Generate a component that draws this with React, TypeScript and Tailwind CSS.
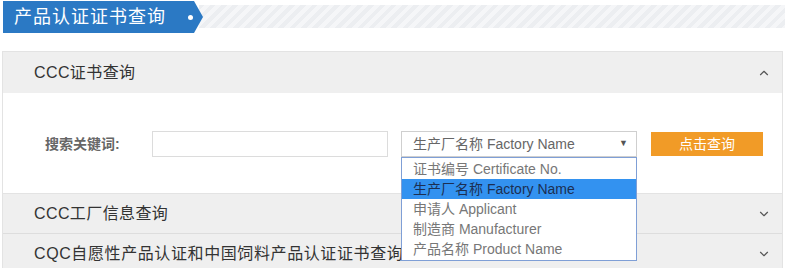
import { ChevronDown, ChevronUp } from "lucide-react";

const options = [
  "证书编号 Certificate No.",
  "生产厂名称 Factory Name",
  "申请人 Applicant",
  "制造商 Manufacturer",
  "产品名称 Product Name",
];

export default function App() {
  return (
    <div className="w-[785px] h-[268px] overflow-hidden bg-white font-['Liberation_Sans','Noto_Sans_CJK_SC',sans-serif]">
      {/* title bar */}
      <div className="flex items-start pt-[1px] pl-[3px]">
        <div className="relative z-10 flex items-center h-[32px] w-[200px] pl-[11px] bg-[#2b79c4] text-white text-[18px] tracking-[1px] [clip-path:polygon(0_0,191px_0,200px_50%,191px_100%,0_100%)]">
          产品认证证书查询
          <span className="ml-[22px] w-[5px] h-[5px] rounded-full bg-white" />
        </div>
        <div className="flex-1 -ml-[4px] mt-[4px] h-[23px] bg-[repeating-linear-gradient(135deg,#eceef1_0px,#eceef1_4px,#f5f6f8_4px,#f5f6f8_8px)]" />
      </div>

      {/* accordion */}
      <div className="mx-[2px] mt-[18px] border border-[#e3e3e3] text-[#333]">
        <div className="flex items-center justify-between h-[41px] pl-[31px] pr-[11px] bg-[#efefef] text-[16px] tracking-[0.4px]">
          <span>CCC证书查询</span>
          <ChevronUp size={14} strokeWidth={2} className="text-[#555]" />
        </div>

        <div className="flex items-center h-[100px] pt-[2px] pl-[42px] bg-white">
          <label className="w-[107px] text-[14px] font-bold text-[#666]">搜索关键词:</label>
          <input className="w-[236px] h-[26px] border border-[#dcdcdc] outline-none" />
          <div className="relative ml-[13px] w-[236px]">
            <div className="flex items-center justify-between h-[26px] pl-[11px] pr-[8px] border border-[#cfcfcf] text-[14px] text-[#666]">
              <span>生产厂名称 Factory Name</span>
              <span className="text-[9px] text-[#555]">▼</span>
            </div>
            <ul className="absolute z-20 top-full left-0 w-full pt-[1px] pb-[1px] bg-white border border-[#7f9fd6] text-[14px] text-[#777]">
              {options.map((o, i) => (
                <li
                  key={o}
                  className={
                    i === 1
                      ? "h-[20px] leading-[20px] pl-[11px] bg-[#3392f0] text-[#1c2f52]"
                      : "h-[20px] leading-[20px] pl-[11px]"
                  }
                >
                  {o}
                </li>
              ))}
            </ul>
          </div>
          <button className="ml-[14px] w-[112px] h-[24px] bg-[#f19b27] text-white text-[14px]">点击查询</button>
        </div>

        <div className="flex items-center justify-between h-[40px] pl-[31px] pr-[11px] bg-[#efefef] text-[16px] tracking-[0.4px] border-t border-[#e3e3e3]">
          <span>CCC工厂信息查询</span>
          <ChevronDown size={14} strokeWidth={2} className="text-[#555]" />
        </div>
        <div className="flex items-center justify-between h-[40px] pl-[31px] pr-[11px] bg-[#efefef] text-[16px] tracking-[0.6px] border-t border-[#dddddd]">
          <span>CQC自愿性产品认证和中国饲料产品认证证书查询</span>
          <ChevronDown size={14} strokeWidth={2} className="text-[#555]" />
        </div>
      </div>
    </div>
  );
}
